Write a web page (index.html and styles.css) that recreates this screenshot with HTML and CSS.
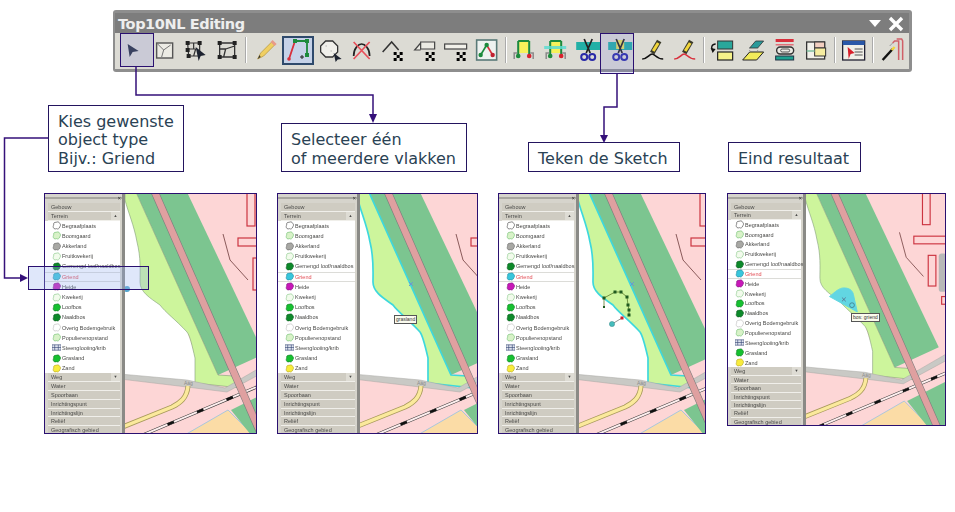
FILE: index.html
```html
<!DOCTYPE html>
<html lang="nl">
<head>
  <meta charset="UTF-8">
  <title>Top10NL Editing</title>
  <link rel="stylesheet" href="styles.css">
</head>
<body>

<!-- shared shapes -->
<svg class="defs" aria-hidden="true">
  <defs>
    <path id="blob" d="M2 4.500C1 2.500 3 1 4.500 1.500 6 .5 8 1 8.500 2.500 10 3.500 9.500 6 8.500 6.500 8.500 8.500 6 9.500 5 8.500 3 9.500 1 8 1.500 6.500 1 6 1.500 5 2 4.500Z"/>
    <path id="checker" d="M0 0h3v3H0zM6 0h3v3H6zM3 3h3v3H3zM0 6h3v3H0zM6 6h3v3H6z"/>
    <g id="scissors">
      <path d="M8 1 14 15M16 1 10 15" stroke="#222" stroke-width="1.7" fill="none"/>
      <circle cx="8" cy="19" r="3" fill="none" stroke="#2a2aa8" stroke-width="2"/>
      <circle cx="16" cy="19" r="3" fill="none" stroke="#2a2aa8" stroke-width="2"/>
    </g>
    <g id="gate">
      <rect x="8" y="4" width="9" height="11" fill="#f6f25a"/>
      <path d="M7 3H18M7 3V17M18 3V17" stroke="#1c8a3c" stroke-width="2" fill="none"/>
      <path d="M3 21V15H6M19 15H22V21" stroke="#8a8a8a" stroke-width="1.5" fill="none"/>
      <circle cx="7" cy="18" r="2.3" fill="#1c8a3c"/>
      <circle cx="18" cy="18" r="2.3" fill="#d8202c"/>
    </g>
    <path id="pencil" d="M11 15 18 3" stroke="#3a3a2a" stroke-width="5" fill="none"/>
    <path id="pencil-fill" d="M12 13 17 5" stroke="#f2d63c" stroke-width="3" fill="none"/>

    <path id="grasland" d="M125 190H135L218 375 234 376 241 388 195 383V358C192 345 190 336 187 332 176 320 165 312 160 305 150 298 140 292 140 282 140 270 141 258 137 242 134 225 128 212 125 200Z"/>
    <g id="map-back">
      <rect x="120" y="190" width="160" height="250" fill="#fdd6d6"/>
      <path d="M120 190H140L205 385 120 375Z" fill="#fff"/>
      <path d="M135 190H186L264 354 218 375Z" fill="#7cc590"/>
    </g>
    <g id="map-front">
      <path d="M120 374 187 380 225 388 275 359V366L227 392 187 387 120 379Z" fill="#c9c9c5" stroke="#a6a6a2" stroke-width=".5"/>
      <text x="184" y="385" class="road-label">Aäg</text>
      <path d="M183 436 228 410 254 436Z" fill="#fbdca6" stroke="#a9c6dc"/>
      <path d="M231 410 275 388V440H255Z" fill="#7cc590"/>
      <path d="M188 386C187 398 180 403 172 407L120 428" fill="none" stroke="#a89a5c" stroke-width="5"/>
      <path d="M188 386C187 398 180 403 172 407L120 428" fill="none" stroke="#fbe99c" stroke-width="3.4"/>
      <path d="M138 437 278 378" fill="none" stroke="#333" stroke-width="3"/>
      <path d="M138 437 278 378" fill="none" stroke="#fdeeee" stroke-width="2"/>
      <path d="M138 437 278 378" fill="none" stroke="#111" stroke-width="2.600" stroke-dasharray="7 25"/>
      <path d="M153 188 275 466" stroke="#7c7c7c" stroke-width="7.800" fill="none"/>
      <path d="M153 188 275 466" stroke="#dfa0a0" stroke-width="6.600" fill="none"/>
      <path d="M223 234 230 260 248 280" stroke="#8a5a5a" fill="none"/>
      <g fill="#fdd6d6" stroke="#cc3440" stroke-width="1.2">
        <rect x="247" y="190" width="8" height="36"/>
        <rect x="238" y="238" width="34" height="8"/>
        <rect x="253" y="258" width="8" height="32"/>
        <rect x="267" y="301" width="8" height="8"/>
      </g>
      <rect x="264" y="256" width="8" height="40" rx="3" fill="#b8b8b8"/>
    </g>
  </defs>
</svg>

<header class="toolbar">
  <div class="toolbar-title">
    <h1>Top10NL Editing</h1>
    <svg class="title-btn" viewBox="0 0 40 16"><path d="M2 4H14L8 11Z" fill="#fff"/><path d="M23 2 35 14M35 2 23 14" stroke="#fff" stroke-width="3.4"/></svg>
  </div>
  <div class="tools">
    <svg class="tool" viewBox="0 0 24 24"><path d="M7 6 18 13 12 14 9 19Z" fill="#2b3444"/></svg>
    <svg class="tool" viewBox="0 0 24 24"><rect x="4" y="5" width="16" height="15" fill="#ecebe4" stroke="#555" stroke-width="1.4"/><path d="M5 6 11 12 9 19M11 12 18 7" stroke="#777" fill="none"/></svg>
    <svg class="tool" viewBox="0 0 24 24"><path d="M4 5H16V18H5ZM4 11H12L10 18M10 5V11" stroke="#333" stroke-width="1.2" fill="none"/><path d="M2 3h4v4H2zM14 3h4v4h-4zM2 10h4v4H2zM3 16h4v4H3z" fill="#222"/><path d="M12 9 22 17 17 18 15 23Z" fill="#1d2330"/></svg>
    <svg class="tool" viewBox="0 0 24 24"><path d="M5 5H20V19H5ZM5 11 11 11 9 19M11 11 20 8" stroke="#333" stroke-width="1.3" fill="none"/><path d="M3 3h4v4H3zM18 3h4v4h-4zM3 17h4v4H3zM18 17h4v4h-4z" fill="#222"/></svg>
    <i class="sep"></i>
    <svg class="tool" viewBox="0 0 24 24"><path d="M5 21 8 15 19 4 22 7 11 18Z" fill="#f0cf62" stroke="#b89a48" stroke-width=".8"/><path d="M18 4 20 2 24 6 22 8Z" fill="#e89a8a"/><path d="M5 21 8 19 7 17Z" fill="#333"/></svg>
    <span class="tool tool-on"><svg viewBox="0 0 24 24"><path d="M3 21 9 3" stroke="#d8303c" stroke-width="1.8"/><path d="M9 3H21V17" stroke="#1c8a3c" stroke-width="1.8" fill="none"/><path d="M7 1h4v4H7zM19 1h4v4h-4zM19 15h4v4h-4z" fill="#1c8a3c"/><circle cx="3" cy="21" r="1.8" fill="#d8303c"/><path d="M14 19h4M16 17v4" stroke="#222"/></svg></span>
    <svg class="tool" viewBox="0 0 24 24"><path d="M7 3H14L19 8V14L14 19H7L2 14V8Z" fill="#f0efea" stroke="#333" stroke-width="1.3"/><path d="M7 8h1M12 13h1" stroke="#999"/><path d="M15 15 23 21 19 21.500 17 24Z" fill="#1d2330"/></svg>
    <svg class="tool" viewBox="0 0 24 24"><path d="M4 18C4 10 9 6 12 6S20 10 20 18" stroke="#222" stroke-width="1.7" fill="none"/><path d="M4 4 20 21M20 4 4 21" stroke="#e8505a" stroke-width="1.7"/></svg>
    <svg class="tool" viewBox="0 0 24 24"><path d="M2 14 11 4 18 12" stroke="#333" stroke-width="1.5" fill="none"/><use href="#checker" x="13" y="14"/></svg>
    <svg class="tool" viewBox="0 0 24 24"><path d="M8 4H22V11H8ZM8 5 2 12H8" stroke="#444" stroke-width="1.2" fill="#ecebe4"/><use href="#checker" x="13" y="14"/></svg>
    <svg class="tool" viewBox="0 0 24 24"><rect x="1" y="6" width="22" height="5" fill="#f2f1ea" stroke="#444" stroke-width="1.2"/><use href="#checker" x="13" y="14"/></svg>
    <svg class="tool" viewBox="0 0 24 24"><rect x="2" y="2" width="20" height="20" fill="#eef2f0" stroke="#5a7a78" stroke-width="1.6"/><path d="M6 17 12 7" stroke="#1c8a3c" stroke-width="1.6"/><path d="M12 7 18 17" stroke="#d8303c" stroke-width="1.6"/><circle cx="12" cy="7" r="2.2" fill="#1c8a3c"/><circle cx="6" cy="17" r="2.2" fill="#1c8a3c"/><circle cx="18" cy="17" r="2.2" fill="#c02030"/></svg>
    <i class="sep sep-narrow"></i>
    <svg class="tool tool-wide" viewBox="0 0 24 24"><use href="#gate"/></svg>
    <svg class="tool tool-wide" viewBox="0 0 24 24"><use href="#gate"/><rect x="1" y="8" width="22" height="3" fill="#5cdcd2" opacity=".85"/></svg>
    <svg class="tool tool-wide" viewBox="0 0 24 24"><rect y="4" width="24" height="8" fill="#22b0a6"/><use href="#scissors"/></svg>
    <svg class="tool tool-wide" viewBox="0 0 24 24"><rect y="4" width="24" height="8" fill="#22b0a6"/><rect x="8" y="2" width="8" height="9" fill="#e8e25a"/><use href="#scissors"/></svg>
    <svg class="tool tool-wide" viewBox="0 0 24 24"><use href="#pencil"/><use href="#pencil-fill"/><path d="M1 21C6 21 8 16 11 16S15 21 22 21" stroke="#111" stroke-width="1.6" fill="none"/></svg>
    <svg class="tool tool-wide" viewBox="0 0 24 24"><use href="#pencil"/><use href="#pencil-fill"/><path d="M1 21C6 21 8 16 11 16S15 21 22 21" stroke="#d8303c" stroke-width="1.6" fill="none"/></svg>
    <i class="sep sep-narrow"></i>
    <svg class="tool" viewBox="0 0 24 24"><rect x="8" y="3" width="15" height="8" fill="#2aa79b" stroke="#333"/><rect x="8" y="14" width="15" height="8" fill="#f6f28a" stroke="#222" stroke-width="1.2"/><path d="M6 6C2 6 1 10 3 12" stroke="#111" stroke-width="1.4" fill="none"/><path d="M1 10 6 11 3 15Z" fill="#111"/></svg>
    <svg class="tool" viewBox="0 0 24 24"><path d="M9 10 15 3H23L17 10Z" fill="#2a9a9a" stroke="#333" stroke-width=".8"/><path d="M2 22 9 14H23L16 22Z" fill="#f2ec5a" stroke="#222"/><path d="M9 10V14M17 10V14" stroke="#999" stroke-dasharray="1 1"/></svg>
    <svg class="tool" viewBox="0 0 24 24"><rect x="3" y="1" width="18" height="3" fill="#d8303c"/><rect x="3" y="6" width="18" height="1.500" fill="#e07078"/><rect x="4" y="9" width="17" height="7" rx="3.500" fill="#ecebe4" stroke="#333" stroke-width="1.400"/><rect x="8" y="11" width="9" height="3" rx="1.500" fill="none" stroke="#555"/><rect x="3" y="18" width="18" height="4" fill="#1ea18f" stroke="#234"/></svg>
    <svg class="tool" viewBox="0 0 24 24"><rect x="3" y="4" width="18" height="17" fill="#f2f1ea" stroke="#333" stroke-width="1.300"/><rect x="11" y="4" width="10" height="6" fill="#f3cfc0" stroke="#333"/><rect x="11" y="10" width="11" height="8" fill="#f6eda0" stroke="#333"/><path d="M3 13H11" stroke="#7fbf9f" stroke-width="1.500"/></svg>
    <i class="sep"></i>
    <svg class="tool" viewBox="0 0 24 24"><rect x="1" y="3" width="22" height="19" fill="#f0efe8" stroke="#223" stroke-width="1.300"/><rect x="1" y="3" width="22" height="4" fill="#2a58a8"/><path d="M13 11H21M13 14H21M13 17H21" stroke="#555"/><path d="M6 9 13 15 9 16 7 21Z" fill="#d8202c"/></svg>
    <i class="sep"></i>
    <svg class="tool" viewBox="0 0 24 24"><path d="M3 22 13 11" stroke="#111" stroke-width="2.400"/><path d="M12 12 15 9" stroke="#f2d63c" stroke-width="2.400"/><path d="M13 5 15 3 19 3V22M17 1 22 1 23 3V22" stroke="#d06068" stroke-width="1.500" fill="none"/><path d="M10 8 13 5" stroke="#999"/></svg>
  </div>
</header>

<main class="steps">

  <section class="step">
    <p class="callout callout-one">Kies gewenste<br>object type<br>Bijv.: Griend</p>
    <div class="panel panel-a">
      <div class="sidebar">
        <div class="side-top"><b>×</b></div>
        <div class="hdr">Gebouw</div>
        <div class="hdr">Terrein<i class="hdr-btn">▲</i></div>
        <ul class="list">
          <li><svg class="blob b-grave" viewBox="0 0 10 10"><use href="#blob"/></svg>Begraafplaats</li>
          <li><svg class="blob b-pale" viewBox="0 0 10 10"><use href="#blob"/></svg>Boomgaard</li>
          <li><svg class="blob b-gray" viewBox="0 0 10 10"><use href="#blob"/></svg>Akkerland</li>
          <li><svg class="blob b-white" viewBox="0 0 10 10"><use href="#blob"/></svg>Fruitkwekerij</li>
          <li><svg class="blob b-mixed" viewBox="0 0 10 10"><use href="#blob"/></svg>Gemengd loof/naaldbos</li>
          <li class="on"><svg class="blob b-cyan" viewBox="0 0 10 10"><use href="#blob"/></svg>Griend</li>
          <li><svg class="blob b-heath" viewBox="0 0 10 10"><use href="#blob"/></svg>Heide</li>
          <li><svg class="blob b-white" viewBox="0 0 10 10"><use href="#blob"/></svg>Kwekerij</li>
          <li><svg class="blob b-green" viewBox="0 0 10 10"><use href="#blob"/></svg>Loofbos</li>
          <li><svg class="blob b-mixed" viewBox="0 0 10 10"><use href="#blob"/></svg>Naaldbos</li>
          <li><svg class="blob b-none" viewBox="0 0 10 10"><use href="#blob"/></svg>Overig Bodemgebruik</li>
          <li><svg class="blob b-pale" viewBox="0 0 10 10"><use href="#blob"/></svg>Populierenopstand</li>
          <li><svg class="blob b-stone" viewBox="0 0 10 10"><path d="M0 2h10v6H0zM0 5h10M3 2v6M7 2v6"/></svg>Steenglooiing/krib</li>
          <li><svg class="blob b-green" viewBox="0 0 10 10"><use href="#blob"/></svg>Grasland</li>
          <li><svg class="blob b-sand" viewBox="0 0 10 10"><use href="#blob"/></svg>Zand</li>
        </ul>
        <div class="hdr">Weg<i class="hdr-btn">▼</i></div>
        <div class="hdr">Water</div>
        <div class="hdr">Spoorbaan</div>
        <div class="hdr">Inrichtingspunt</div>
        <div class="hdr">Inrichtingslijn</div>
        <div class="hdr">Reliëf</div>
        <div class="hdr">Geografisch gebied</div>
      </div>
      <div class="divider"></div>
      <div class="map">
        <svg viewBox="125 194 131 239" preserveAspectRatio="none">
          <use href="#map-back"/>
          <use href="#grasland" class="area"/>
          <use href="#map-front"/>
          <circle cx="127" cy="289" r="3" fill="#55a6cf"/>
        </svg>
      </div>
    </div>
  </section>

  <section class="step">
    <p class="callout">Selecteer één<br>of meerdere vlakken</p>
    <div class="panel panel-b">
      <div class="sidebar">
        <div class="side-top"><b>×</b></div>
        <div class="hdr">Gebouw</div>
        <div class="hdr">Terrein<i class="hdr-btn">▲</i></div>
        <ul class="list">
          <li><svg class="blob b-grave" viewBox="0 0 10 10"><use href="#blob"/></svg>Begraafplaats</li>
          <li><svg class="blob b-pale" viewBox="0 0 10 10"><use href="#blob"/></svg>Boomgaard</li>
          <li><svg class="blob b-gray" viewBox="0 0 10 10"><use href="#blob"/></svg>Akkerland</li>
          <li><svg class="blob b-white" viewBox="0 0 10 10"><use href="#blob"/></svg>Fruitkwekerij</li>
          <li><svg class="blob b-mixed" viewBox="0 0 10 10"><use href="#blob"/></svg>Gemengd loof/naaldbos</li>
          <li class="on"><svg class="blob b-cyan" viewBox="0 0 10 10"><use href="#blob"/></svg>Griend</li>
          <li><svg class="blob b-heath" viewBox="0 0 10 10"><use href="#blob"/></svg>Heide</li>
          <li><svg class="blob b-white" viewBox="0 0 10 10"><use href="#blob"/></svg>Kwekerij</li>
          <li><svg class="blob b-green" viewBox="0 0 10 10"><use href="#blob"/></svg>Loofbos</li>
          <li><svg class="blob b-mixed" viewBox="0 0 10 10"><use href="#blob"/></svg>Naaldbos</li>
          <li><svg class="blob b-none" viewBox="0 0 10 10"><use href="#blob"/></svg>Overig Bodemgebruik</li>
          <li><svg class="blob b-pale" viewBox="0 0 10 10"><use href="#blob"/></svg>Populierenopstand</li>
          <li><svg class="blob b-stone" viewBox="0 0 10 10"><path d="M0 2h10v6H0zM0 5h10M3 2v6M7 2v6"/></svg>Steenglooiing/krib</li>
          <li><svg class="blob b-green" viewBox="0 0 10 10"><use href="#blob"/></svg>Grasland</li>
          <li><svg class="blob b-sand" viewBox="0 0 10 10"><use href="#blob"/></svg>Zand</li>
        </ul>
        <div class="hdr">Weg<i class="hdr-btn">▼</i></div>
        <div class="hdr">Water</div>
        <div class="hdr">Spoorbaan</div>
        <div class="hdr">Inrichtingspunt</div>
        <div class="hdr">Inrichtingslijn</div>
        <div class="hdr">Reliëf</div>
        <div class="hdr">Geografisch gebied</div>
      </div>
      <div class="divider"></div>
      <div class="map">
        <svg viewBox="127 194 117 239" preserveAspectRatio="none">
          <use href="#map-back"/>
          <use href="#grasland" class="area area-cyan"/>
          <use href="#map-front"/>
          <path d="M176 282 180 286M180 282 176 286" stroke="#6a9ad0"/>
        </svg>
        <span class="tip tip-b">grasland</span>
      </div>
    </div>
  </section>

  <section class="step">
    <p class="callout callout-three">Teken de Sketch</p>
    <div class="panel panel-c">
      <div class="sidebar">
        <div class="side-top"><b>×</b></div>
        <div class="hdr">Gebouw</div>
        <div class="hdr">Terrein<i class="hdr-btn">▲</i></div>
        <ul class="list">
          <li><svg class="blob b-grave" viewBox="0 0 10 10"><use href="#blob"/></svg>Begraafplaats</li>
          <li><svg class="blob b-pale" viewBox="0 0 10 10"><use href="#blob"/></svg>Boomgaard</li>
          <li><svg class="blob b-gray" viewBox="0 0 10 10"><use href="#blob"/></svg>Akkerland</li>
          <li><svg class="blob b-white" viewBox="0 0 10 10"><use href="#blob"/></svg>Fruitkwekerij</li>
          <li><svg class="blob b-mixed" viewBox="0 0 10 10"><use href="#blob"/></svg>Gemengd loof/naaldbos</li>
          <li class="on"><svg class="blob b-cyan" viewBox="0 0 10 10"><use href="#blob"/></svg>Griend</li>
          <li><svg class="blob b-heath" viewBox="0 0 10 10"><use href="#blob"/></svg>Heide</li>
          <li><svg class="blob b-white" viewBox="0 0 10 10"><use href="#blob"/></svg>Kwekerij</li>
          <li><svg class="blob b-green" viewBox="0 0 10 10"><use href="#blob"/></svg>Loofbos</li>
          <li><svg class="blob b-mixed" viewBox="0 0 10 10"><use href="#blob"/></svg>Naaldbos</li>
          <li><svg class="blob b-none" viewBox="0 0 10 10"><use href="#blob"/></svg>Overig Bodemgebruik</li>
          <li><svg class="blob b-pale" viewBox="0 0 10 10"><use href="#blob"/></svg>Populierenopstand</li>
          <li><svg class="blob b-stone" viewBox="0 0 10 10"><path d="M0 2h10v6H0zM0 5h10M3 2v6M7 2v6"/></svg>Steenglooiing/krib</li>
          <li><svg class="blob b-green" viewBox="0 0 10 10"><use href="#blob"/></svg>Grasland</li>
          <li><svg class="blob b-sand" viewBox="0 0 10 10"><use href="#blob"/></svg>Zand</li>
        </ul>
        <div class="hdr">Weg<i class="hdr-btn">▼</i></div>
        <div class="hdr">Water</div>
        <div class="hdr">Spoorbaan</div>
        <div class="hdr">Inrichtingspunt</div>
        <div class="hdr">Inrichtingslijn</div>
        <div class="hdr">Reliëf</div>
        <div class="hdr">Geografisch gebied</div>
      </div>
      <div class="divider"></div>
      <div class="map">
        <svg viewBox="126 194 126 239" preserveAspectRatio="none">
          <use href="#map-back"/>
          <use href="#grasland" class="area area-cyan"/>
          <use href="#map-front"/>
          <path d="M177 282 181 286M181 282 177 286" stroke="#6a9ad0"/>
          <!-- the sketch -->
          <path d="M151 307V298L162 292H168L174 297 175 305 176 310V315" fill="none" stroke="#5a7a2a" stroke-width=".8"/>
          <g fill="#1f5a1f">
            <rect x="149.500" y="296.500" width="3" height="3"/>
            <rect x="150" y="306" width="2" height="2"/>
            <rect x="160.500" y="290.500" width="3" height="3"/>
            <rect x="166.500" y="290.500" width="3" height="3"/>
            <rect x="172.500" y="295.500" width="3" height="3"/>
            <rect x="173.500" y="303.500" width="3" height="3"/>
            <rect x="174.500" y="308.500" width="3" height="3"/>
            <rect x="174.500" y="313.500" width="3" height="3"/>
          </g>
          <path d="M169 318 159 324" stroke="#777" stroke-width=".8"/>
          <rect x="167.500" y="316.500" width="3" height="3" fill="#d0202c"/>
          <circle cx="159" cy="324" r="2.600" fill="#45bcbc" stroke="#3a8a8a" stroke-width=".5"/>
        </svg>
      </div>
    </div>
  </section>

  <section class="step step-last">
    <p class="callout callout-four">Eind resultaat</p>
    <div class="panel panel-d">
      <div class="sidebar">
        <div class="side-top"><b>×</b></div>
        <div class="hdr">Gebouw</div>
        <div class="hdr">Terrein<i class="hdr-btn">▲</i></div>
        <ul class="list">
          <li><svg class="blob b-grave" viewBox="0 0 10 10"><use href="#blob"/></svg>Begraafplaats</li>
          <li><svg class="blob b-pale" viewBox="0 0 10 10"><use href="#blob"/></svg>Boomgaard</li>
          <li><svg class="blob b-gray" viewBox="0 0 10 10"><use href="#blob"/></svg>Akkerland</li>
          <li><svg class="blob b-white" viewBox="0 0 10 10"><use href="#blob"/></svg>Fruitkwekerij</li>
          <li><svg class="blob b-mixed" viewBox="0 0 10 10"><use href="#blob"/></svg>Gemengd loof/naaldbos</li>
          <li class="on"><svg class="blob b-cyan" viewBox="0 0 10 10"><use href="#blob"/></svg>Griend</li>
          <li><svg class="blob b-heath" viewBox="0 0 10 10"><use href="#blob"/></svg>Heide</li>
          <li><svg class="blob b-white" viewBox="0 0 10 10"><use href="#blob"/></svg>Kwekerij</li>
          <li><svg class="blob b-green" viewBox="0 0 10 10"><use href="#blob"/></svg>Loofbos</li>
          <li><svg class="blob b-mixed" viewBox="0 0 10 10"><use href="#blob"/></svg>Naaldbos</li>
          <li><svg class="blob b-none" viewBox="0 0 10 10"><use href="#blob"/></svg>Overig Bodemgebruik</li>
          <li><svg class="blob b-pale" viewBox="0 0 10 10"><use href="#blob"/></svg>Populierenopstand</li>
          <li><svg class="blob b-stone" viewBox="0 0 10 10"><path d="M0 2h10v6H0zM0 5h10M3 2v6M7 2v6"/></svg>Steenglooiing/krib</li>
          <li><svg class="blob b-green" viewBox="0 0 10 10"><use href="#blob"/></svg>Grasland</li>
          <li><svg class="blob b-sand" viewBox="0 0 10 10"><use href="#blob"/></svg>Zand</li>
        </ul>
        <div class="hdr">Weg<i class="hdr-btn">▼</i></div>
        <div class="hdr">Water</div>
        <div class="hdr">Spoorbaan</div>
        <div class="hdr">Inrichtingspunt</div>
        <div class="hdr">Inrichtingslijn</div>
        <div class="hdr">Reliëf</div>
        <div class="hdr">Geografisch gebied</div>
      </div>
      <div class="divider"></div>
      <div class="map">
        <svg viewBox="125.500 194 145 241" preserveAspectRatio="none">
          <use href="#map-back"/>
          <use href="#grasland" class="area"/>
          <use href="#map-front"/>
          <path d="M150 301C156 296 160 292 165 292 170 292 174 294 175 299L179 317Z" fill="#62d6e2" stroke="#62d6e2"/>
          <path d="M163 302 167 306M167 302 163 306" stroke="#557"  stroke-width=".7"/>
          <circle cx="173.500" cy="310" r="2.500" fill="none" stroke="#3a6a7a" stroke-width=".7"/>
        </svg>
        <span class="tip tip-d">bos: griend</span>
      </div>
    </div>
  </section>

</main>

<!-- arrows and highlights that sit on top of the page -->
<svg class="overlay" viewBox="0 0 955 512" aria-hidden="true">
  <rect class="mark" x="120.500" y="33.500" width="33" height="33"/>
  <rect class="mark" x="600.500" y="33.500" width="33" height="40"/>
  <rect class="mark mark-band" x="28.500" y="266.500" width="120" height="23"/>
  <path class="wire" d="M48 138H4.500V278H22"/>
  <path class="wire" d="M136 67V95H373V116"/>
  <path class="wire" d="M617 74V107H604V136"/>
  <path class="head" d="M20 274 28 278 20 282Z"/>
  <path class="head" d="M369 114 373 123 377 114Z"/>
  <path class="head" d="M600 135 604 143 608 135Z"/>
</svg>

</body>
</html>
```

FILE: styles.css
```css
* { box-sizing: border-box; }
body {
  margin: 0;
  width: 955px;
  height: 512px;
  position: relative;
  overflow: hidden;
  background: #fff;
  font-family: "Liberation Sans", sans-serif;
}
.defs {
  position: absolute;
  width: 0;
  height: 0;
}

/* toolbar */
.toolbar {
  width: 799px;
  height: 62px;
  margin: 10px 0 0 113px;
  padding: 3px 3px 3px 2px;
  background: #8e8e8e;
  border-radius: 3px;
}
.toolbar-title {
  height: 20px;
  display: flex;
  align-items: center;
  justify-content: space-between;
  padding: 2px 2px 0 3px;
  background: #7d7d7d;
}
.toolbar-title h1 {
  margin: 0;
  font: bold 14.500px "DejaVu Sans", sans-serif;
  letter-spacing: -0.4px;
  color: #eeeeee;
}
.title-btn {
  width: 40px;
  height: 16px;
}
.tools {
  height: 36px;
  display: flex;
  align-items: center;
  padding: 0 0 2px 2.300px;
  background: #dcdbd4;
  filter: blur(0.4px);
}
.tool {
  flex: 0 0 31.300px;
  height: 24px;
}
.tool-wide { flex-basis: 32.400px; }
.tool-on {
  height: 29px;
  margin: 0 1px;
  flex-basis: 29.300px;
  padding: 2px;
  display: flex;
  align-items: center;
  justify-content: center;
  background: #c6d2e8;
  border: 2px solid #2f4a6c;
}
.tool-on svg {
  width: 24px;
  height: 24px;
}
.sep {
  flex: 0 0 7px;
  height: 26px;
  background: linear-gradient(90deg, transparent 3px, #aaa 3px, #aaa 4px, #fff 4px, #fff 5px, transparent 5px);
}
.sep-narrow {
  flex-basis: 4.500px;
  background: linear-gradient(90deg, transparent 2px, #aaa 2px, #aaa 3px, #fff 3px, #fff 4px, transparent 4px);
}

/* the four steps */
.steps {
  display: flex;
  gap: 20px;
  margin-top: 32px;
  padding-left: 44px;
}
.step {
  display: grid;
  grid-template-rows: 68px auto;
  row-gap: 21px;
}
.step-last { margin-left: 1px; }
.callout {
  align-self: end;
  justify-self: start;
  margin: 0 0 0 4px;
  padding: 7px 10px 3px 9px;
  border: 1px solid #23145e;
  background: #fff;
  font: 16px/18.500px "DejaVu Sans", sans-serif;
  color: #2a4254;
  white-space: nowrap;
}
.callout-one { width: 136px; }
.callout-three { margin-left: 30px; padding-right: 11px; }
.callout-four { margin-left: 1px; padding-right: 11px; }

/* screenshot panels */
.panel {
  display: flex;
  height: 241px;
  border: 1px solid #2a1070;
  overflow: hidden;
}
.panel-a { width: 213px; }
.panel-b { width: 201px; }
.panel-c { width: 208px; }
.panel-d { width: 219px; height: 233px; }
.sidebar {
  flex: 0 0 77px;
  overflow: hidden;
  background: #d6d4cc;
  font-size: 5.500px;
  color: #4a4a48;
  filter: blur(0.3px);
}
.panel-b .sidebar { flex-basis: 79px; }
.panel-d .sidebar { flex-basis: 75px; }
.side-top {
  height: 9px;
  margin-bottom: 0;
  padding-right: 1px;
  text-align: right;
  line-height: 8px;
  color: #222;
  background: linear-gradient(#d6d4cc 3px, #a8a6a0 3px, #a8a6a0 5px, #d6d4cc 5px);
}
.side-top b { background: #d6d4cc; }
.hdr {
  position: relative;
  height: 8.800px;
  margin: 0 2px 0 3px;
  padding-left: 3px;
  line-height: 8.800px;
  white-space: nowrap;
  background: #cfccc2;
  border-bottom: 1px solid #f0efea;
}
.hdr-btn {
  position: absolute;
  top: 0;
  right: 0;
  width: 9px;
  height: 8px;
  font-style: normal;
  font-size: 4px;
  line-height: 8px;
  text-align: center;
  background: #dedcd4;
}
.list {
  margin: 0 2px 0 0;
  padding: 0;
  list-style: none;
  background: #fff;
}
.list li {
  display: flex;
  align-items: center;
  gap: 1px;
  height: 10.200px;
  padding-left: 7px;
  white-space: nowrap;
}
.list li.on {
  color: #e24a52;
  border-top: 1px solid #dcdcd8;
  border-bottom: 1px solid #dcdcd8;
}
.panel-d .hdr {
  height: 8.400px;
  line-height: 8.400px;
}
.panel-d .list li { height: 9.850px; }
.blob {
  flex: 0 0 9px;
  width: 9px;
  height: 9px;
  stroke-width: 0.7;
}
.b-grave { fill: #fff; stroke: #444; }
.b-pale { fill: #d8f2c8; stroke: #6fbf6f; }
.b-gray { fill: #a8a8a4; stroke: #666; }
.b-white { fill: #f2fbec; stroke: #88c888; }
.b-mixed { fill: #0d8a2a; stroke: #0b5a1e; }
.b-cyan { fill: #38c6dc; stroke: #1a8aa0; }
.b-heath { fill: #c818b8; stroke: #801080; }
.b-green { fill: #16c030; stroke: #0d7a20; }
.b-none { fill: #fff; stroke: #bbb; }
.b-stone { fill: #dfe4ee; stroke: #3a4a78; }
.b-sand { fill: #f8ec3c; stroke: #b8a820; }
.divider {
  flex: 0 0 3px;
  background: #8a8a86;
}
.map {
  position: relative;
  flex: 1;
  min-width: 0;
  overflow: hidden;
}
.map svg {
  display: block;
  width: 100%;
  height: 100%;
}
.area {
  fill: #cdf59c;
  stroke: #7f9a7a;
  stroke-width: 0.6;
}
.area-cyan {
  stroke: #3ed8dc;
  stroke-width: 1.700;
}
.road-label {
  font: 5px "Liberation Sans", sans-serif;
  fill: #8a8a8a;
}
.tip {
  position: absolute;
  padding: 0 1px;
  font-size: 5px;
  line-height: 6.500px;
  color: #333;
  background: #fbfbee;
  border: 1px solid #555;
  white-space: nowrap;
}
.tip-b { left: 34px; top: 121px; }
.tip-d { left: 45px; top: 119px; }

/* highlights and arrows */
.overlay {
  position: absolute;
  left: 0;
  top: 0;
  width: 955px;
  height: 512px;
  pointer-events: none;
}
.mark {
  fill: rgba(120, 130, 225, 0.18);
  stroke: #2a1070;
}
.mark-band { fill: rgba(150, 175, 240, 0.3); }
.wire {
  fill: none;
  stroke: #35107a;
  stroke-width: 1.500;
}
.head { fill: #35107a; }
```
